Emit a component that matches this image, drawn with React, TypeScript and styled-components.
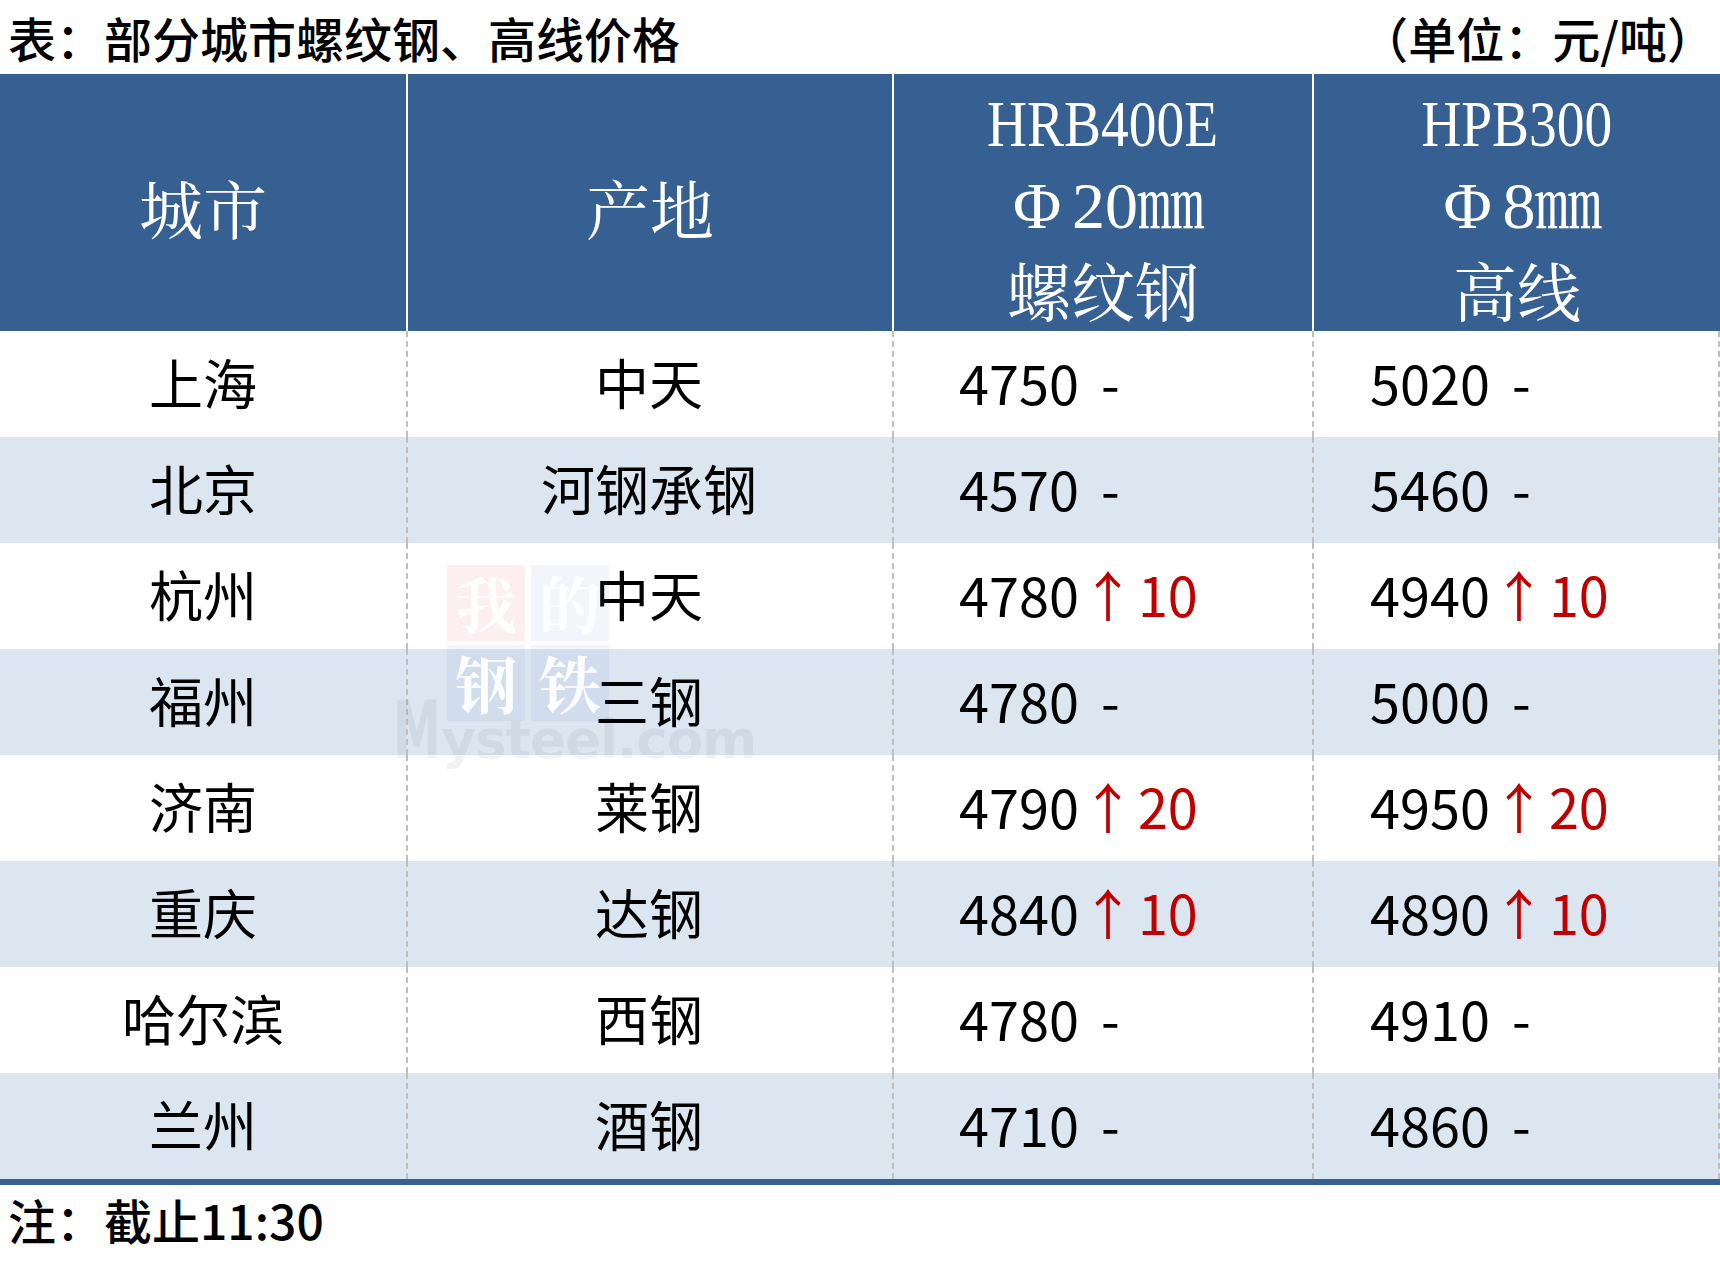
import React from "react";
import styled, { createGlobalStyle } from "styled-components";

const GlobalStyle = createGlobalStyle`
  html, body {
    margin: 0;
    padding: 0;
    background: #fff;
  }
  body {
    font-family: "Noto Sans CJK SC", "Noto Sans", sans-serif;
    color: #000;
  }
`;

type Price = { value: number; change?: number };
type Row = { city: string; origin: string; rebar: Price; wire: Price };

const rows: Row[] = [
  { city: "上海", origin: "中天", rebar: { value: 4750 }, wire: { value: 5020 } },
  { city: "北京", origin: "河钢承钢", rebar: { value: 4570 }, wire: { value: 5460 } },
  { city: "杭州", origin: "中天", rebar: { value: 4780, change: 10 }, wire: { value: 4940, change: 10 } },
  { city: "福州", origin: "三钢", rebar: { value: 4780 }, wire: { value: 5000 } },
  { city: "济南", origin: "莱钢", rebar: { value: 4790, change: 20 }, wire: { value: 4950, change: 20 } },
  { city: "重庆", origin: "达钢", rebar: { value: 4840, change: 10 }, wire: { value: 4890, change: 10 } },
  { city: "哈尔滨", origin: "西钢", rebar: { value: 4780 }, wire: { value: 4910 } },
  { city: "兰州", origin: "酒钢", rebar: { value: 4710 }, wire: { value: 4860 } },
];

const BLUE = "#366092";
const SHADE = "#dce6f1";
const DASH = "repeating-linear-gradient(to bottom, #bfbfbf 0 6px, transparent 6px 10px)";

const Page = styled.div`
  width: 1720px;
`;

const TitleBar = styled.div`
  height: 74px;
  display: flex;
  align-items: center;
  justify-content: space-between;
  padding: 0 5px 0 8px;
  font-size: 48px;
  line-height: 1;
`;

const Title = styled.div`
  font-weight: 500;
`;

const Unit = styled.div`
  font-weight: 500;
`;

const Table = styled.div`
  position: relative;
  display: grid;
  grid-template-columns: 406px 486px 420px 408px;
  grid-template-rows: 257px repeat(8, 106px);
  border-bottom: 6px solid ${BLUE};
`;

const HeadCell = styled.div<{ $first?: boolean }>`
  background: ${BLUE};
  color: #fff;
  display: flex;
  flex-direction: column;
  align-items: center;
  justify-content: center;
  padding-top: 7px;
  border-left: ${(p) => (p.$first ? "none" : "2px solid #fff")};
  font-family: "Noto Serif CJK SC", "Liberation Serif", "Noto Sans CJK SC", serif;
  font-size: 64px;
  line-height: 82px;
`;

const HeadLine = styled.span<{ $latin?: boolean; $narrow?: boolean }>`
  display: inline-block;
  white-space: nowrap;
  font-family: ${(p) =>
    p.$latin
      ? `"Liberation Serif", "Noto Serif CJK SC", "Noto Sans CJK SC", serif`
      : `"Noto Serif CJK SC", "Noto Sans CJK SC", serif`};
  font-size: ${(p) => (p.$latin ? "66px" : "64px")};
  transform: ${(p) => (p.$narrow ? "scaleX(0.84)" : "none")};
`;

const Phi = styled.span`
  display: inline-block;
  width: 70px;
  text-align: center;
`;

const BodyCell = styled.div<{ $shade: boolean; $first?: boolean; $last?: boolean; $pad?: number }>`
  display: flex;
  align-items: center;
  justify-content: ${(p) => (p.$pad !== undefined ? "flex-start" : "center")};
  padding-left: ${(p) => (p.$pad !== undefined ? `${p.$pad}px` : "0")};
  padding-bottom: 5px;
  background-color: ${(p) => (p.$shade ? SHADE : "#fff")};
  background-image: ${(p) =>
    [p.$first ? null : DASH, p.$last ? DASH : null].filter(Boolean).join(", ") || "none"};
  background-size: 2px 100%;
  background-repeat: no-repeat;
  background-position: ${(p) => (p.$first ? "right top" : "left top, right top")};
  font-size: 54px;
  line-height: 1;
  white-space: pre;
`;

const Flat = styled.span`
  margin-left: 22px;
`;

const Up = styled.span`
  color: #c00000;
`;

const Arrow = styled.span`
  margin: 0 3px 0 2px;
`;

const Footer = styled.div`
  height: 68px;
  display: flex;
  align-items: center;
  padding-left: 8px;
  font-size: 48px;
  font-weight: 500;
  line-height: 1;
`;

/* watermark logo lying over the table */
const Watermark = styled.div`
  position: absolute;
  left: 393px;
  top: 491px;
  width: 362px;
  height: 222px;
  pointer-events: none;
`;

const LogoGrid = styled.div`
  margin-left: 54px;
  display: grid;
  grid-template-columns: 78px 78px;
  grid-auto-rows: 76px;
  gap: 4px 6px;
`;

const LogoTile = styled.div<{ $tone: "red" | "blue" }>`
  display: flex;
  align-items: center;
  justify-content: center;
  background: ${(p) => (p.$tone === "red" ? "rgba(235, 80, 80, 0.09)" : "rgba(70, 120, 185, 0.07)")};
  color: rgba(255, 255, 255, 0.92);
  font-family: "Noto Serif CJK SC", "Noto Sans CJK SC", serif;
  font-weight: 700;
  font-size: 62px;
  line-height: 1;
`;

const LogoText = styled.div`
  position: absolute;
  left: 0;
  top: 126px;
  color: rgba(0, 0, 0, 0.05);
  font-family: "DejaVu Sans", "Liberation Sans", sans-serif;
  font-weight: 700;
  font-size: 53px;
  letter-spacing: -1px;
  white-space: nowrap;
  line-height: 1;
`;

const BigM = styled.span`
  font-size: 80px;
  display: inline-block;
  transform: scaleX(0.6);
  transform-origin: left bottom;
  margin-right: -30px;
`;

const PriceText = ({ price }: { price: Price }) => (
  <>
    {price.value}
    {price.change ? (
      <Up>
        <Arrow>↑</Arrow>
        {price.change}
      </Up>
    ) : (
      <Flat>-</Flat>
    )}
  </>
);

export default function App() {
  return (
    <Page>
      <GlobalStyle />
      <TitleBar>
        <Title>表：部分城市螺纹钢、高线价格</Title>
        <Unit>（单位：元/吨）</Unit>
      </TitleBar>
      <Table>
        <HeadCell $first>
          <HeadLine>城市</HeadLine>
        </HeadCell>
        <HeadCell>
          <HeadLine>产地</HeadLine>
        </HeadCell>
        <HeadCell>
          <HeadLine $latin $narrow>
            HRB400E
          </HeadLine>
          <HeadLine $latin>
            <Phi>Φ</Phi>20㎜
          </HeadLine>
          <HeadLine>螺纹钢</HeadLine>
        </HeadCell>
        <HeadCell>
          <HeadLine $latin $narrow>
            HPB300
          </HeadLine>
          <HeadLine $latin>
            <Phi>Φ</Phi>8㎜
          </HeadLine>
          <HeadLine>高线</HeadLine>
        </HeadCell>
        {rows.map((r, i) => {
          const shade = i % 2 === 1;
          return (
            <React.Fragment key={r.city}>
              <BodyCell $shade={shade} $first>
                {r.city}
              </BodyCell>
              <BodyCell $shade={shade}>{r.origin}</BodyCell>
              <BodyCell $shade={shade} $pad={67}>
                <PriceText price={r.rebar} />
              </BodyCell>
              <BodyCell $shade={shade} $pad={58} $last>
                <PriceText price={r.wire} />
              </BodyCell>
            </React.Fragment>
          );
        })}
        <Watermark>
          <LogoGrid>
            <LogoTile $tone="red">我</LogoTile>
            <LogoTile $tone="blue">的</LogoTile>
            <LogoTile $tone="blue">钢</LogoTile>
            <LogoTile $tone="blue">铁</LogoTile>
          </LogoGrid>
          <LogoText>
            <BigM>M</BigM>ysteel.com
          </LogoText>
        </Watermark>
      </Table>
      <Footer>注：截止11:30</Footer>
    </Page>
  );
}
